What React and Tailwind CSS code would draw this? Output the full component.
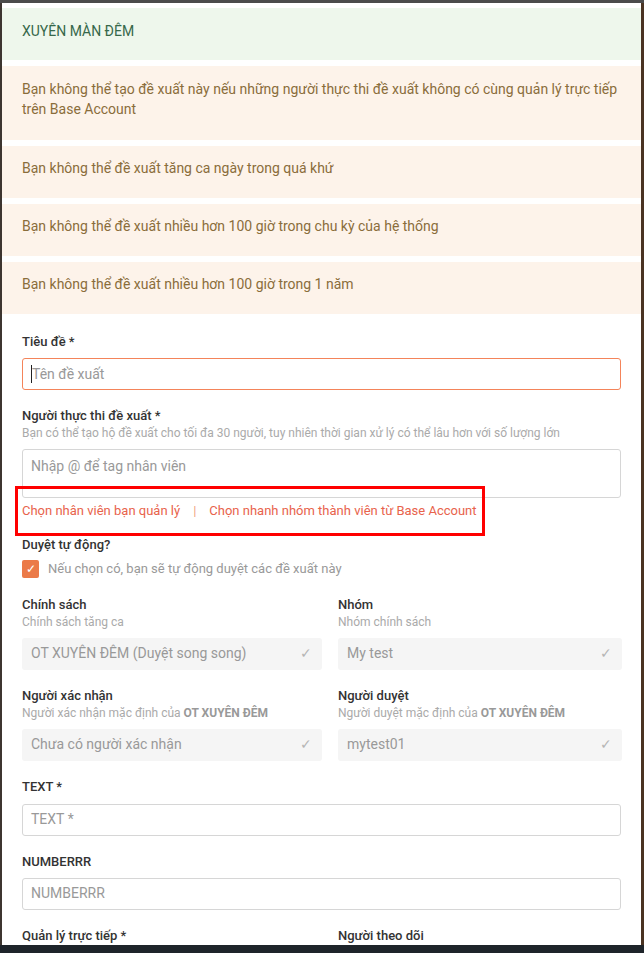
import React from "react";

const alerts = [
  "Bạn không thể tạo đề xuất này nếu những người thực thi đề xuất không có cùng quản lý trực tiếp trên Base Account",
  "Bạn không thể đề xuất tăng ca ngày trong quá khứ",
  "Bạn không thể đề xuất nhiều hơn 100 giờ trong chu kỳ của hệ thống",
  "Bạn không thể đề xuất nhiều hơn 100 giờ trong 1 năm",
];

const Label = ({ children }) => (
  <div className="text-[13px] leading-[18px] font-medium text-[#333]">{children}</div>
);

const Sub = ({ children }) => (
  <div className="text-[12px] leading-[16px] text-[#aaa]">{children}</div>
);

const ReadOnly = ({ value }) => (
  <div className="mt-[8px] h-[32px] flex items-center justify-between bg-[#f5f5f5] rounded-[3px] pl-[9px] pr-[10px]">
    <span className="text-[14px] text-[#999]">{value}</span>
    <span className="text-[14px] text-[#b5b5b5]">✓</span>
  </div>
);

const TextInput = ({ placeholder, className = "mt-[8px]" }) => (
  <div
    className={`${className} h-[32px] flex items-center border border-[#d6d6d6] rounded-[3px] px-[8px] text-[14px] text-[#999]`}
  >
    {placeholder}
  </div>
);

const App = () => {
  return (
    <div
      className="w-[644px] h-[953px] flex flex-col overflow-hidden bg-[#4b4b4b]"
      style={{ fontFamily: "Roboto, 'Noto Sans', sans-serif" }}
    >
      <div className="h-[3px] bg-[#4b4b4b]" />
      <div className="flex flex-1 min-h-0">
        <div className="w-[2px] bg-[#3d3530]" />
        <div className="flex-1 bg-white pt-[5px] overflow-hidden">
          <div className="flex flex-col gap-[6px]">
            <div className="bg-[#eef7ec] px-5 pt-[13px] pb-[19px] text-[14px] leading-5 text-[#36684a]">
              XUYÊN MÀN ĐÊM
            </div>
            {alerts.map((a, i) => (
              <div
                key={i}
                className={`bg-[#fdf3ea] px-5 text-[14px] leading-5 text-[#8a6d3b] ${
                  i === 0 ? "pt-[13px] pb-[21px]" : "pt-[12px] pb-[20px]"
                }`}
              >
                {a}
              </div>
            ))}
          </div>

          <div className="px-5 pt-[19px]">
            <div className="mb-[17px]">
              <Label>Tiêu đề *</Label>
              <div className="mt-[7px] h-[32px] flex items-center border border-[#f4845a] rounded-[3px] px-[8px] text-[14px] text-[#999]">
                <span className="w-px h-[18px] bg-[#222]" />
                <span>Tên đề xuất</span>
              </div>
            </div>

            <div>
              <Label>Người thực thi đề xuất *</Label>
              <Sub>
                Bạn có thể tạo hộ đề xuất cho tối đa 30 người, tuy nhiên thời gian xử lý có thể lâu hơn với số lượng lớn
              </Sub>
              <div className="mt-[8px] h-[49px] border border-[#d6d6d6] rounded-[3px] px-[8px] pt-[6px] text-[14px] leading-5 text-[#999]">
                Nhập @ để tag nhân viên
              </div>
              <div className="relative mt-[4px] flex items-center text-[13px] leading-[18px] text-[#e8634c]">
                <span>Chọn nhân viên bạn quản lý</span>
                <span className="mx-[13px] text-[#f0a383]">|</span>
                <span>Chọn nhanh nhóm thành viên từ Base Account</span>
                <div className="absolute left-[-7px] top-[-16px] w-[470px] h-[50px] border-[3px] border-[#ff0000]" />
              </div>
            </div>

            <div className="mt-[16px] mb-[17px]">
              <Label>Duyệt tự động?</Label>
              <div className="mt-[5px] flex items-center gap-[9px]">
                <div className="w-[17px] h-[18px] rounded-[2px] bg-[#eb7a48] flex items-center justify-center text-white text-[12px] leading-none">
                  ✓
                </div>
                <span className="text-[13px] text-[#999]">Nếu chọn có, bạn sẽ tự động duyệt các đề xuất này</span>
              </div>
            </div>

            <div className="grid grid-cols-[300px_284px] gap-x-4">
              <div className="mb-[17px]">
                <Label>Chính sách</Label>
                <Sub>Chính sách tăng ca</Sub>
                <ReadOnly value="OT XUYÊN ĐÊM (Duyệt song song)" />
              </div>
              <div className="mb-[17px]">
                <Label>Nhóm</Label>
                <Sub>Nhóm chính sách</Sub>
                <ReadOnly value="My test" />
              </div>
              <div className="mb-[17px]">
                <Label>Người xác nhận</Label>
                <Sub>
                  Người xác nhận mặc định của <b className="font-bold text-[#999]">OT XUYÊN ĐÊM</b>
                </Sub>
                <ReadOnly value="Chưa có người xác nhận" />
              </div>
              <div className="mb-[17px]">
                <Label>Người duyệt</Label>
                <Sub>
                  Người duyệt mặc định của <b className="font-bold text-[#999]">OT XUYÊN ĐÊM</b>
                </Sub>
                <ReadOnly value="mytest01" />
              </div>
            </div>

            <div className="mb-[17px]">
              <Label>TEXT *</Label>
              <TextInput placeholder="TEXT *" />
            </div>

            <div className="mb-[17px]">
              <Label>NUMBERRR</Label>
              <TextInput placeholder="NUMBERRR" className="mt-[7px]" />
            </div>

            <div className="grid grid-cols-[300px_284px] gap-x-4">
              <div>
                <Label>Quản lý trực tiếp *</Label>
                <Sub>Bạn cần chọn quản lý trực tiếp của người thực thi</Sub>
              </div>
              <div>
                <Label>Người theo dõi</Label>
                <Sub>Ai sẽ theo dõi đề xuất này?</Sub>
              </div>
            </div>
          </div>
        </div>
        <div className="w-[3px] bg-[#4a3322]" />
      </div>
      <div className="h-[8px] bg-[#1e242a]" />
    </div>
  );
};

export default App;
